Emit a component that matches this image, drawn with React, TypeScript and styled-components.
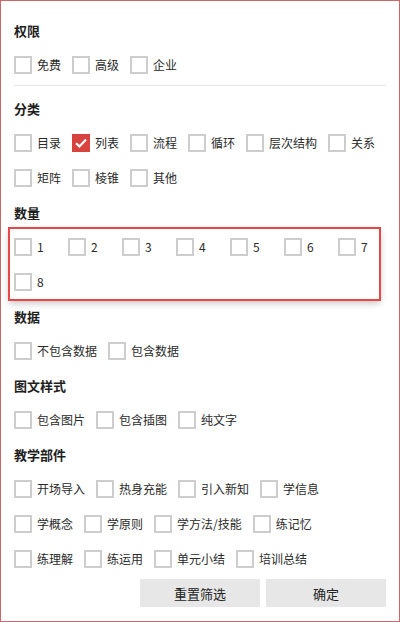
import styled, { createGlobalStyle } from 'styled-components';

const GlobalStyle = createGlobalStyle`
    body {
        margin: 0;
        background: #fff;
        font-family: "Noto Sans CJK SC", "Noto Sans", sans-serif;
        color: #222;
    }
`;

const Frame = styled.div`
    box-sizing: border-box;
    width: 400px;
    height: 622px;
    border: 1px solid #c9696b;
    padding: 12px 13px 0 13px;
    background: #fff;
    overflow: hidden;
`;

const SectionTitle = styled.div`
    height: 34px;
    display: flex;
    align-items: center;
    font-size: 13px;
    font-weight: 700;
    color: #1e1e1e;
`;

const Divider = styled.div`
    height: 1px;
    background: #e6e6e6;
    margin: 3px 0 5px;
`;

const OptionWrap = styled.div`
    display: flex;
    flex-wrap: wrap;
    margin-right: -3px;
`;

const NumberGrid = styled.div`
    display: grid;
    grid-template-columns: repeat(7, 54px);
`;

const Highlight = styled.div`
    margin: 0 7px 0 -4px;
    padding-left: 4px;
    box-shadow: 0 0 0 2px #e8474a, 0 3px 7px 1px rgba(0, 0, 0, 0.25);
`;

const Option = styled.label<{ $spaced?: boolean }>`
    height: 35px;
    display: flex;
    align-items: center;
    margin-right: ${(p) => (p.$spaced ? '11px' : '0')};
    font-size: 12px;
    color: #2a2a2a;
    cursor: pointer;
`;

const Box = styled.span<{ $checked?: boolean }>`
    box-sizing: border-box;
    width: 18px;
    height: 18px;
    flex: none;
    display: flex;
    align-items: center;
    justify-content: center;
    border: 2px solid ${(p) => (p.$checked ? '#d8423f' : '#cdcdcd')};
    background: ${(p) => (p.$checked ? '#d8423f' : '#fff')};
`;

const Text = styled.span`
    margin-left: 5px;
    line-height: 1;
    white-space: nowrap;
`;

const Footer = styled.div`
    display: flex;
    justify-content: flex-end;
    gap: 6px;
    margin-top: 3px;
`;

const ActionButton = styled.button`
    width: 120px;
    height: 28px;
    border: none;
    background: #e7e7e7;
    font-family: "Noto Sans CJK SC", sans-serif;
    font-size: 13px;
    color: #222;
    cursor: pointer;
`;

const Check = ({ checked, label }: { checked?: boolean; label: string }) => (
    <>
        <Box $checked={checked}>
            {checked && (
                <svg width="14" height="14" viewBox="0 0 14 14">
                    <polyline points="2,7.2 5.4,10.4 12,3.4" fill="none" stroke="#fff" strokeWidth="2.2" />
                </svg>
            )}
        </Box>
        <Text>{label}</Text>
    </>
);

const sections = [
    { title: '数据', items: ['不包含数据', '包含数据'] },
    { title: '图文样式', items: ['包含图片', '包含插图', '纯文字'] },
    {
        title: '教学部件',
        items: ['开场导入', '热身充能', '引入新知', '学信息', '学概念', '学原则', '学方法/技能', '练记忆', '练理解', '练运用', '单元小结', '培训总结'],
    },
];

const categories = ['目录', '列表', '流程', '循环', '层次结构', '关系', '矩阵', '棱锥', '其他'];

const App = () => {
    return (
        <>
            <GlobalStyle />
            <Frame>
                <SectionTitle>权限</SectionTitle>
                <OptionWrap>
                    {['免费', '高级', '企业'].map((t) => (
                        <Option key={t} $spaced><Check label={t} /></Option>
                    ))}
                </OptionWrap>
                <Divider />

                <SectionTitle>分类</SectionTitle>
                <OptionWrap>
                    {categories.map((t) => (
                        <Option key={t} $spaced><Check label={t} checked={t === '列表'} /></Option>
                    ))}
                </OptionWrap>

                <SectionTitle>数量</SectionTitle>
                <Highlight>
                    <NumberGrid>
                        {['1', '2', '3', '4', '5', '6', '7', '8'].map((t) => (
                            <Option key={t}><Check label={t} /></Option>
                        ))}
                    </NumberGrid>
                </Highlight>

                {sections.map((s) => (
                    <div key={s.title}>
                        <SectionTitle>{s.title}</SectionTitle>
                        <OptionWrap>
                            {s.items.map((t) => (
                                <Option key={t} $spaced><Check label={t} /></Option>
                            ))}
                        </OptionWrap>
                    </div>
                ))}

                <Footer>
                    <ActionButton>重置筛选</ActionButton>
                    <ActionButton>确定</ActionButton>
                </Footer>
            </Frame>
        </>
    );
};

export default App;
